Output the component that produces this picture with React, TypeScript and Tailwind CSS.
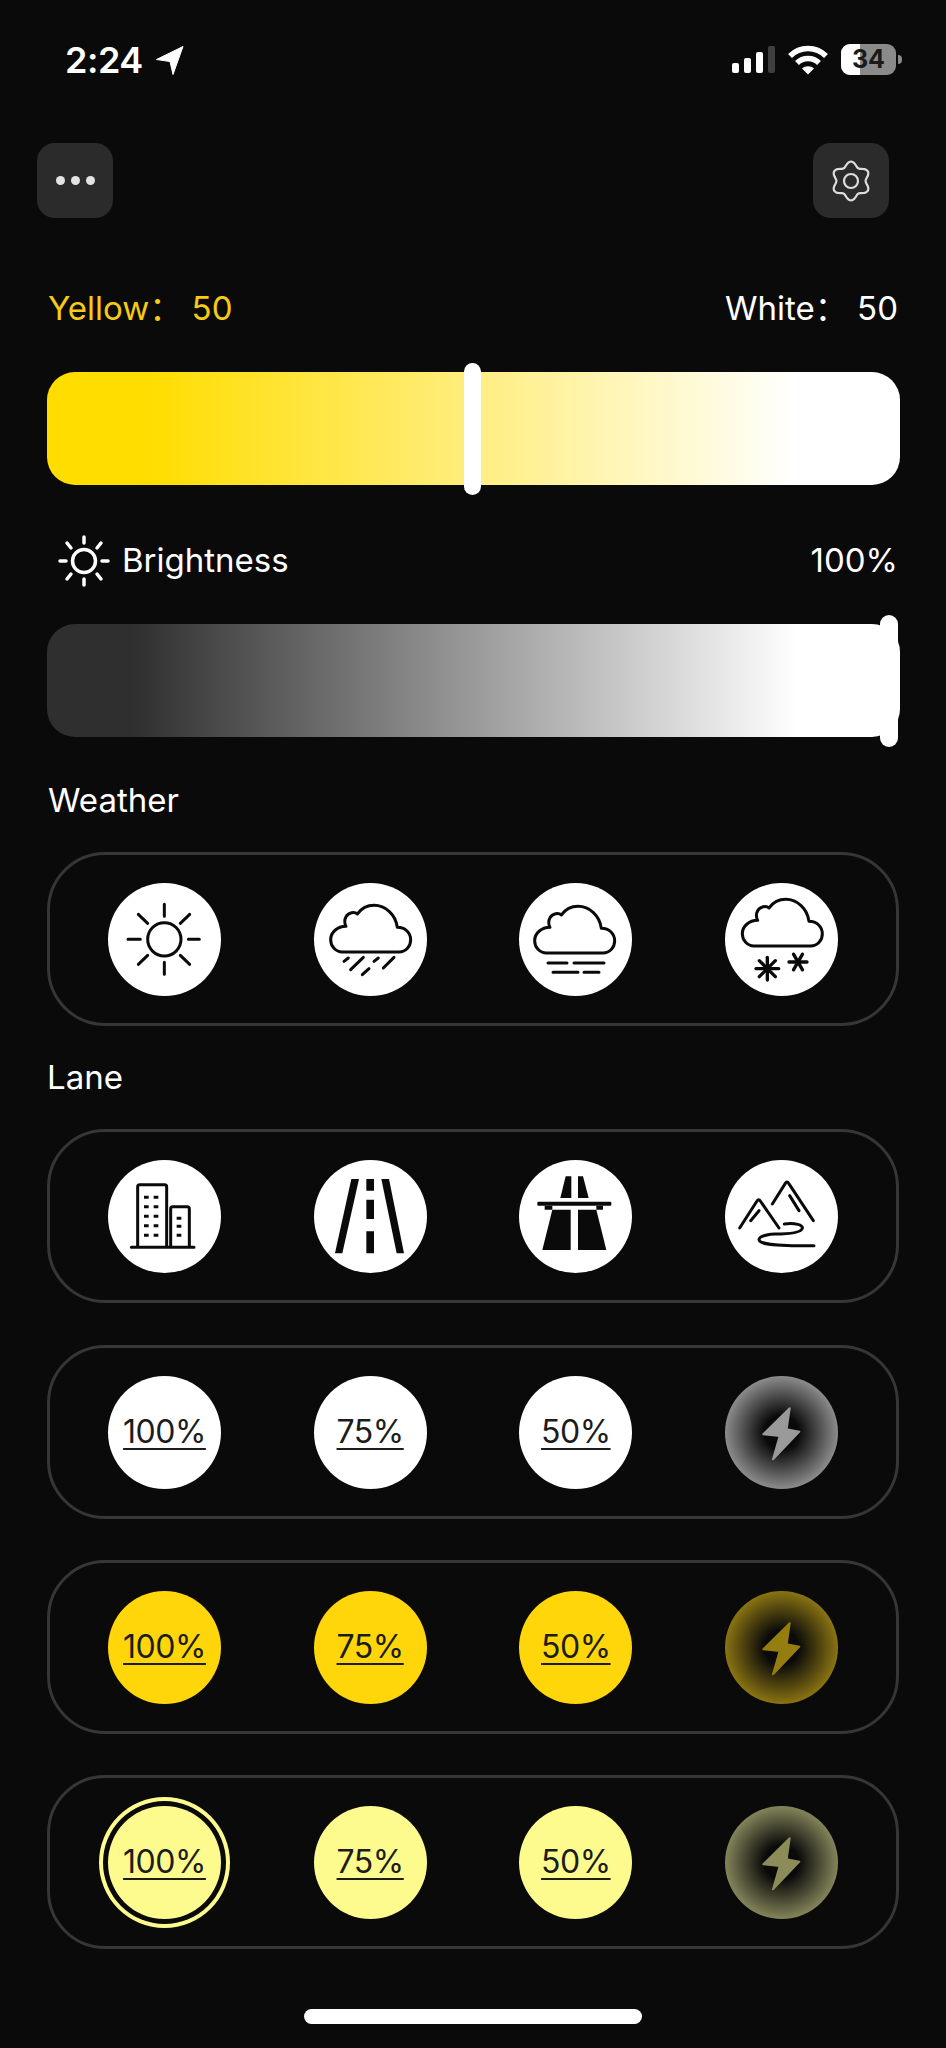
import type { ReactNode } from "react";

const CLOUD =
  "M85 207H255C276 207 290 190 290 170C290 150 274 133 250 133C245 95 215 67 180 67C158 67 141 78 130 93C122 85 103 88 96 101C90 112 92 122 96 130C70 130 50 148 50 170C50 190 65 207 85 207Z";

function Glyph({ children }: { children: ReactNode }) {
  return (
    <svg viewBox="0 0 339 339" className="w-full h-full" fill="none" stroke="#0a0a0a" strokeWidth={9} strokeLinecap="round" strokeLinejoin="round">
      {children}
    </svg>
  );
}

function Snowflake({ x, y, r, arms }: { x: number; y: number; r: number; arms: number }) {
  const spokes = Array.from({ length: arms }, (_, i) => (i * 180) / arms + 90);
  return (
    <g transform={`translate(${x} ${y})`} strokeWidth={10}>
      {spokes.map((a) => (
        <line key={a} x1={0} y1={-r} x2={0} y2={r} transform={`rotate(${a})`} />
      ))}
    </g>
  );
}

const SunIcon = () => (
  <Glyph>
    <circle cx="169" cy="169" r="50" />
    <path d="M169 64V100M169 238V274M60 169H97M241 169H274M91 94L119 121M245 94L217 121M91 244L119 217M245 244L217 217" />
  </Glyph>
);

const RainIcon = () => (
  <Glyph>
    <path d={CLOUD} />
    <path d="M90 235L103 225M110 260L148 223M145 275L165 257M180 235L193 225M208 255L240 223" />
  </Glyph>
);

const FogIcon = () => (
  <Glyph>
    <path d={CLOUD} transform="translate(-3 3)" />
    <path d="M87 240H144M165 240H255M102 268H177M195 268H240" />
  </Glyph>
);

const SnowIcon = () => (
  <Glyph>
    <path d={CLOUD} transform="translate(2 -18)" />
    <Snowflake x={127} y={257} r={34} arms={4} />
    <Snowflake x={219} y={237} r={27} arms={3} />
  </Glyph>
);

const CityIcon = () => (
  <Glyph>
    <path d="M89 262V80C89 76 91 74 95 74H170C174 74 176 76 176 80V262M188 262V146C188 142 190 140 194 140H238C242 140 244 142 244 146V262M70 262H258" />
    <g strokeWidth={9} strokeLinecap="butt">
      <path d="M108 112H122M137 112H151M108 140H122M137 140H151M108 169H122M137 169H151M108 197H122M137 197H151M108 226H122M137 226H151" />
      <path d="M206 175H220M206 199H220M206 226H220" />
    </g>
  </Glyph>
);

const RoadIcon = () => (
  <svg viewBox="0 0 339 339" className="w-full h-full" fill="#0a0a0a">
    <path d="M112 57H135L85 280H63Z" />
    <path d="M202 57H225L270 280H248Z" />
    <path d="M157 57H180V92H157ZM157 119H180V177H157ZM157 214H180V280H157Z" />
  </svg>
);

const HighwayIcon = () => (
  <svg viewBox="0 0 339 339" className="w-full h-full" fill="#0a0a0a">
    <path d="M140 49H157V114H124Z" />
    <path d="M177 49H192L209 114H177Z" />
    <rect x="55" y="125" width="222" height="12" rx="3" />
    <path d="M77 137H100V149H77ZM232 137H252V149H232Z" />
    <path d="M100 149H155V270H70Z" />
    <path d="M177 149H232L262 270H177Z" />
  </svg>
);

const MountainIcon = () => (
  <Glyph>
    <path d="M44 204L96 123C99 118 103 118 106 123L162 204M77 182L102 152M142 132L181 70C184 65 188 65 191 70L265 182M194 107L222 152" />
    <path d="M178 192C210 188 235 195 232 205C228 218 190 222 150 222C110 224 95 235 105 244C120 256 160 255 210 257H267" />
  </Glyph>
);

function Bolt({ fill }: { fill: string }) {
  return (
    <svg viewBox="0 0 339 339" className="w-full h-full">
      <path d="M194 97L115 175L164 180L144 250L223 167L185 160Z" fill={fill} stroke={fill} strokeWidth={6} strokeLinejoin="round" />
    </svg>
  );
}

function Circle({ className = "", children }: { className?: string; children?: ReactNode }) {
  return <div className={`w-[113px] h-[113px] rounded-full shrink-0 flex items-center justify-center ${className}`}>{children}</div>;
}

function Panel({ mt, children }: { mt: string; children: ReactNode }) {
  return (
    <div className={`${mt} ml-[47px] w-[852px] h-[174px] shrink-0 rounded-[58px] border-[3px] border-[#363636] px-[58px] flex items-center justify-between`}>
      {children}
    </div>
  );
}

function Percent({ value }: { value: string }) {
  return <span className="text-[32px] leading-none text-[#1c1c1c] underline underline-offset-[5px] decoration-2 tracking-[-0.5px]">{value}</span>;
}

function PowerRow({ mt, tone, glow, bolt, selected }: { mt: string; tone: string; glow: string; bolt: string; selected?: boolean }) {
  return (
    <Panel mt={mt}>
      <Circle className={`${tone} ${selected ? "shadow-[0_0_0_5px_#0a0a0a,0_0_0_9px_#fdfb8e]" : ""}`}>
        <Percent value="100%" />
      </Circle>
      <Circle className={tone}>
        <Percent value="75%" />
      </Circle>
      <Circle className={tone}>
        <Percent value="50%" />
      </Circle>
      <Circle className={glow}>
        <Bolt fill={bolt} />
      </Circle>
    </Panel>
  );
}

function gearPath() {
  const pts: string[] = [];
  for (let i = 0; i < 120; i++) {
    const t = (i / 120) * Math.PI * 2;
    const r = 17 + 2.4 * Math.cos(6 * (t + Math.PI / 2));
    pts.push(`${(24 + r * Math.cos(t)).toFixed(2)} ${(24 + r * Math.sin(t)).toFixed(2)}`);
  }
  return `M${pts.join("L")}Z`;
}

function StatusBar() {
  return (
    <div className="pt-[44px] pl-[65px] pr-[44px] h-[75px] shrink-0 flex items-center justify-between">
      <div className="flex items-center">
        <span className="text-[36px] leading-none font-semibold text-white tracking-[-0.5px]">2:24</span>
        <svg viewBox="0 0 28 30" className="w-[28px] h-[30px] ml-[13px]" fill="#fff">
          <path d="M27 1.5L0.5 14.5L14 16.5L17 29.5Z" stroke="#fff" strokeWidth={1} strokeLinejoin="round" />
        </svg>
      </div>
      <div className="flex items-center">
        <div className="flex items-end gap-[5px] h-[27px]">
          <div className="w-[7px] h-[10px] rounded-[2px] bg-white" />
          <div className="w-[7px] h-[15px] rounded-[2px] bg-white" />
          <div className="w-[7px] h-[21px] rounded-[2px] bg-white" />
          <div className="w-[7px] h-[27px] rounded-[2px] bg-[#3f3f3f]" />
        </div>
        <svg viewBox="0 0 40 30" className="w-[40px] h-[30px] ml-[13px]" fill="none" stroke="#fff" strokeWidth={5.5}>
          <path d="M2 11C12 1 28 1 38 11" />
          <path d="M9 18C15 12 25 12 31 18" />
          <path d="M14 23.5L20 29.5L26 23.5C22.5 20.5 17.5 20.5 14 23.5Z" fill="#fff" stroke="none" />
        </svg>
        <div className="relative ml-[13px] w-[55px] h-[31px] rounded-[9px] bg-[#8a8a8a] overflow-hidden flex items-center justify-center">
          <div className="absolute left-0 top-0 bottom-0 w-[19px] bg-white" />
          <span className="relative text-[25px] leading-none font-bold text-[#1a1a1a]">34</span>
        </div>
        <div className="ml-[2px] w-[4px] h-[9px] rounded-r-full bg-[#8a8a8a]" />
      </div>
    </div>
  );
}

export default function App() {
  return (
    <div
      className="w-[946px] h-[2048px] bg-[#0a0a0a] flex flex-col overflow-hidden text-white"
      style={{ fontFamily: 'Inter, "Noto Sans CJK SC", sans-serif' }}
    >
      <StatusBar />

      <div className="mt-[68px] pl-[37px] pr-[57px] flex justify-between shrink-0">
        <div className="w-[76px] h-[75px] rounded-[18px] bg-[#2b2b2b] flex items-center justify-center gap-[6px]">
          <div className="w-[9px] h-[9px] rounded-full bg-[#e4e4e4]" />
          <div className="w-[9px] h-[9px] rounded-full bg-[#e4e4e4]" />
          <div className="w-[9px] h-[9px] rounded-full bg-[#e4e4e4]" />
        </div>
        <div className="w-[76px] h-[75px] rounded-[18px] bg-[#2b2b2b] flex items-center justify-center">
          <svg viewBox="0 0 48 48" className="w-[48px] h-[48px]" fill="none" stroke="#dcdcdc" strokeWidth={2.2}>
            <path d={gearPath()} />
            <circle cx="24" cy="24" r="7" />
          </svg>
        </div>
      </div>

      <div className="mt-[71px] h-[40px] px-[48px] flex items-center justify-between text-[33px] shrink-0">
        <span className="text-[#f5cb14]">Yellow： 50</span>
        <span>White： 50</span>
      </div>

      <div className="relative mt-[43px] ml-[47px] w-[853px] h-[113px] shrink-0 rounded-[28px] bg-[linear-gradient(90deg,#ffdd00_12%,#ffffff_88%)]">
        <div className="absolute left-[417px] top-[-9px] w-[17px] h-[132px] rounded-full bg-white" />
      </div>

      <div className="mt-[50px] h-[52px] pl-[58px] pr-[48px] flex items-center justify-between text-[33px] shrink-0">
        <div className="flex items-center gap-[12px]">
          <svg viewBox="0 0 52 52" className="w-[52px] h-[52px]" fill="none" stroke="#fff" strokeWidth={3.5} strokeLinecap="round">
            <circle cx="26" cy="26" r="11.5" />
            <path d="M26 2V8M26 44V50M2 26H8M44 26H50M9 8L13 13M43 8L39 13M9 44L13 39M43 44L39 39" />
          </svg>
          <span>Brightness</span>
        </div>
        <span>100%</span>
      </div>

      <div className="relative mt-[37px] ml-[47px] w-[853px] h-[113px] shrink-0 rounded-[28px] bg-[linear-gradient(90deg,#2f2f2f_10%,#ffffff_88%)]">
        <div className="absolute left-[833px] top-[-9px] w-[18px] h-[132px] rounded-full bg-white" />
      </div>

      <div className="mt-[44px] h-[40px] pl-[48px] flex items-center text-[33px] shrink-0">Weather</div>
      <Panel mt="mt-[31px]">
        <Circle className="bg-white"><SunIcon /></Circle>
        <Circle className="bg-white"><RainIcon /></Circle>
        <Circle className="bg-white"><FogIcon /></Circle>
        <Circle className="bg-white"><SnowIcon /></Circle>
      </Panel>

      <div className="mt-[32px] h-[40px] pl-[47px] flex items-center text-[33px] shrink-0">Lane</div>
      <Panel mt="mt-[31px]">
        <Circle className="bg-white"><CityIcon /></Circle>
        <Circle className="bg-white"><RoadIcon /></Circle>
        <Circle className="bg-white"><HighwayIcon /></Circle>
        <Circle className="bg-white"><MountainIcon /></Circle>
      </Panel>

      <PowerRow
        mt="mt-[42px]"
        tone="bg-white"
        glow="bg-[radial-gradient(circle_closest-side,#0a0a0a_30%,#8c8c8c_100%)]"
        bolt="#9a9a9a"
      />
      <PowerRow
        mt="mt-[41px]"
        tone="bg-[#ffd60a]"
        glow="bg-[radial-gradient(circle_closest-side,#0a0a0a_30%,#8a7412_100%)]"
        bolt="#957d10"
      />
      <PowerRow
        mt="mt-[41px]"
        tone="bg-[#fdfb8e]"
        glow="bg-[radial-gradient(circle_closest-side,#0a0a0a_30%,#84845a_100%)]"
        bolt="#8c8c58"
        selected
      />

      <div className="mt-[60px] ml-[304px] w-[338px] h-[15px] shrink-0 rounded-full bg-white" />
    </div>
  );
}
